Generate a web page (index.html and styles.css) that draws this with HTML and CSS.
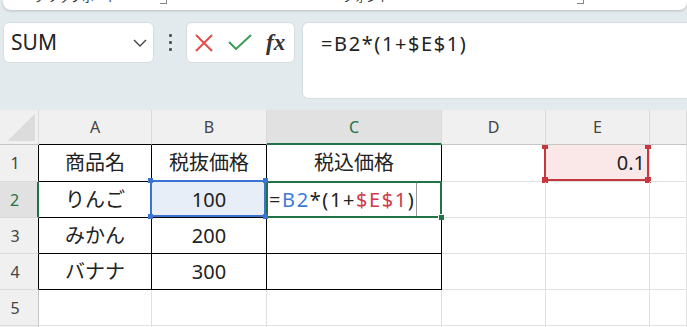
FILE: index.html
```html
<!DOCTYPE html>
<html>
<head>
<meta charset="utf-8">
<title>税込価格</title>
<link rel="stylesheet" href="styles.css">
</head>
<body>

<div class="Ribbon">
    <span class="GroupLabel LabelClipboard">クリップボード</span>
    <span class="Launcher LauncherClipboard"></span>
    <span class="GroupLabel LabelFont">フォント</span>
    <span class="Launcher LauncherFont"></span>
</div>

<div class="FormulaBar">
    <div class="NameBox">
        <span class="NameText">SUM</span>
        <svg class="Chevron" width="14" height="8" viewBox="0 0 14 8"><polyline points="1,1 7,7 13,1" fill="none" stroke="#444" stroke-width="1.4"/></svg>
    </div>
    <div class="Grip"><i></i><i></i><i></i></div>
    <div class="EditButtons">
        <svg class="CancelIcon" width="18" height="18" viewBox="0 0 18 18"><path d="M1 1 L17 17 M17 1 L1 17" stroke="#e84a4a" stroke-width="2" fill="none"/></svg>
        <svg class="EnterIcon" width="24" height="16" viewBox="0 0 24 16"><path d="M1 8 L8 15 L23 1" stroke="#3c9d58" stroke-width="2" fill="none"/></svg>
        <span class="Fx">fx</span>
    </div>
    <div class="FormulaBox">=B2*(1+$E$1)</div>
</div>

<div class="Sheet">
    <div class="Corner"><div class="SelectAll"></div></div>
    <div class="ColHead TableTop">A</div>
    <div class="ColHead TableTop">B</div>
    <div class="ColHead Active">C</div>
    <div class="ColHead">D</div>
    <div class="ColHead">E</div>
    <div class="ColHead"></div>

    <div class="RowHead Boxed">1</div>
    <div class="Cell Boxed">商品名</div>
    <div class="Cell Boxed">税抜価格</div>
    <div class="Cell Boxed">税込価格</div>
    <div class="Cell"></div>
    <div class="Cell RefCell">0.1
        <div class="RefFrame">
            <span class="Handle RefTL"></span><span class="Handle RefTR"></span>
            <span class="Handle RefBL"></span><span class="Handle RefBR"></span>
        </div>
    </div>
    <div class="Cell"></div>

    <div class="RowHead Active">2</div>
    <div class="Cell Boxed">りんご</div>
    <div class="Cell Boxed Picked">100
        <div class="PickFrame">
            <span class="Handle PickTL"></span><span class="Handle PickTR"></span>
            <span class="Handle PickBL"></span><span class="Handle PickBR"></span>
        </div>
    </div>
    <div class="Cell Boxed Editing">
        <span class="Formula">=<span class="RefBlue">B2</span>*(1+<span class="RefRed">$E$1</span>)</span>
        <span class="Caret"></span>
        <div class="EditFrame"><span class="Handle FillHandle"></span></div>
    </div>
    <div class="Cell"></div>
    <div class="Cell"></div>
    <div class="Cell"></div>

    <div class="RowHead Boxed">3</div>
    <div class="Cell Boxed">みかん</div>
    <div class="Cell Boxed">200</div>
    <div class="Cell Boxed"></div>
    <div class="Cell"></div>
    <div class="Cell"></div>
    <div class="Cell"></div>

    <div class="RowHead Boxed">4</div>
    <div class="Cell Boxed">バナナ</div>
    <div class="Cell Boxed">300</div>
    <div class="Cell Boxed"></div>
    <div class="Cell"></div>
    <div class="Cell"></div>
    <div class="Cell"></div>

    <div class="RowHead">5</div>
    <div class="Cell"></div>
    <div class="Cell"></div>
    <div class="Cell"></div>
    <div class="Cell"></div>
    <div class="Cell"></div>
    <div class="Cell"></div>

    <div class="RowHead"></div>
    <div class="Cell"></div>
    <div class="Cell"></div>
    <div class="Cell"></div>
    <div class="Cell"></div>
    <div class="Cell"></div>
    <div class="Cell"></div>
</div>

</body>
</html>
```

FILE: styles.css
```css
	html, body {
		margin: 0;
		height: 100%;
		overflow: hidden;
		background: #e2eaed;
		font-family: "Noto Sans", "Noto Sans CJK JP", sans-serif;
		color: #222;
	}

	/* ribbon edge, cut off at the top */
	.Ribbon {
		display: flex;
		align-items: flex-end;
		height: 10px;
		margin-left: 3px;
		overflow: hidden;
		background: #fff;
		border-radius: 0 0 8px 8px;
		box-shadow: 0 1px 3px rgba(0, 0, 0, 0.18);
	}
	.GroupLabel {
		font-size: 12px;
		line-height: 12px;
		margin-bottom: 6px;
		color: #333;
		white-space: nowrap;
	}
	.LabelClipboard { margin-left: 31px; }
	.LabelFont { margin-left: 175px; }
	.Launcher {
		width: 6px;
		height: 8px;
		margin-bottom: 6px;
		border-right: 1px solid #888;
		border-bottom: 1px solid #888;
	}
	.LauncherClipboard { margin-left: 42px; }
	.LauncherFont { margin-left: 187px; }

	/* formula bar */
	.FormulaBar {
		display: flex;
		align-items: flex-start;
		height: 100px;
		padding: 12px 0 0 3px;
		box-sizing: border-box;
	}
	.NameBox, .EditButtons, .FormulaBox {
		background: #fff;
		border: 1px solid #d6dde0;
		border-radius: 6px;
		box-sizing: border-box;
	}
	.NameBox {
		display: flex;
		align-items: center;
		justify-content: space-between;
		width: 151px;
		height: 41px;
		padding: 0 6px 0 7px;
	}
	.NameText {
		font-size: 21px;
		line-height: 1;
		color: #222;
	}
	.Grip {
		display: flex;
		flex-direction: column;
		align-items: center;
		justify-content: center;
		gap: 4px;
		width: 32px;
		height: 41px;
	}
	.Grip i {
		width: 3px;
		height: 3px;
		background: #555;
		border-radius: 1px;
	}
	.EditButtons {
		display: flex;
		align-items: center;
		width: 109px;
		height: 41px;
		padding-left: 8px;
	}
	.EnterIcon { margin-left: 15px; margin-top: -2px; }
	.Fx {
		margin-left: 14px;
		font-family: "Liberation Serif", serif;
		font-style: italic;
		font-weight: bold;
		font-size: 23px;
		line-height: 1;
		color: #333;
	}
	.FormulaBox {
		flex: 1;
		height: 77px;
		margin-left: 7px;
		border-right: none;
		border-radius: 6px 0 0 6px;
		padding: 9px 0 0 18px;
		font-size: 20px;
		line-height: 24px;
		letter-spacing: 1.6px;
		color: #222;
	}

	/* worksheet */
	.Sheet {
		display: grid;
		grid-template-columns: 39px 113px 115px 175px 104px 104px 1fr;
		grid-template-rows: 35px 37px 36px 36px 36px 36px 36px;
		background: #fff;
	}
	.Corner, .ColHead, .RowHead, .Cell {
		box-sizing: border-box;
		display: flex;
		align-items: center;
		line-height: 1;
	}
	.Corner {
		justify-content: flex-end;
		align-items: flex-end;
		background: #f0f0f0;
		border-right: 1px solid #dadada;
		border-bottom: 1px solid #c6c6c6;
		padding: 0 3px 3px 0;
	}
	.SelectAll {
		width: 28px;
		height: 28px;
		background: linear-gradient(to bottom right, transparent 50%, #dcdcdc 50%);
	}
	.ColHead {
		justify-content: center;
		background: #f0f0f0;
		border-right: 1px solid #dadada;
		border-bottom: 1px solid #c6c6c6;
		font-size: 16px;
		color: #444;
	}
	.ColHead.TableTop { border-bottom-color: #000; }
	.ColHead.Active {
		background: #e1e1e1;
		border-bottom: 2px solid #217346;
		color: #217346;
	}
	.RowHead {
		justify-content: center;
		padding-right: 8px;
		background: #f0f0f0;
		border-right: 1px solid #c6c6c6;
		border-bottom: 1px solid #dadada;
		font-size: 16px;
		color: #444;
	}
	.RowHead.Boxed { border-right-color: #000; }
	.RowHead.Active {
		background: #e1e1e1;
		border-right: 2px solid #217346;
		color: #217346;
	}
	.Cell {
		position: relative;
		justify-content: center;
		border-right: 1px solid #e1e1e1;
		border-bottom: 1px solid #e1e1e1;
		font-size: 20px;
		color: #222;
	}
	.Cell.Boxed {
		border-right-color: #000;
		border-bottom-color: #000;
	}

	/* selected B2 */
	.Picked { background: #e8eef8; }
	.PickFrame {
		position: absolute;
		top: -2px;
		left: -2px;
		right: 0;
		bottom: 0;
		border: 2px solid #3b73d1;
		z-index: 3;
	}
	.Handle {
		position: absolute;
		width: 5px;
		height: 5px;
	}
	.PickFrame .Handle { background: #3b73d1; }
	.PickTL { top: -4px; left: -4px; }
	.PickTR { top: -4px; right: -4px; }
	.PickBL { bottom: -4px; left: -4px; }
	.PickBR { bottom: -4px; right: -4px; }

	/* C2 in edit mode */
	.Editing {
		justify-content: flex-start;
		padding-left: 2px;
	}
	.Formula { letter-spacing: 1.6px; }
	.RefBlue { color: #3d7ad8; }
	.RefRed { color: #d03a4c; }
	.Caret {
		align-self: stretch;
		margin-left: 1px;
		border-left: 1px solid #9a9a9a;
	}
	.EditFrame {
		position: absolute;
		top: -1px;
		left: -1px;
		right: -1px;
		bottom: -1px;
		border: 2px solid #217346;
		z-index: 2;
	}
	.FillHandle {
		right: -4px;
		bottom: -4px;
		background: #217346;
		border: 1px solid #fff;
		border-width: 1px 0 0 1px;
	}

	/* referenced E1 */
	.RefCell {
		justify-content: flex-end;
		padding-right: 4px;
		background: #fae8e9;
	}
	.RefFrame {
		position: absolute;
		top: 0;
		left: -2px;
		right: 0;
		bottom: 0;
		border: 2px solid #c4373f;
		border-top: none;
	}
	.RefFrame .Handle {
		background: #c4373f;
		width: 6px;
		height: 6px;
	}
	.RefTL { top: 0; left: -4px; height: 4px !important; }
	.RefTR { top: 0; right: -4px; height: 4px !important; }
	.RefBL { bottom: -4px; left: -4px; }
	.RefBR { bottom: -4px; right: -4px; }
```
